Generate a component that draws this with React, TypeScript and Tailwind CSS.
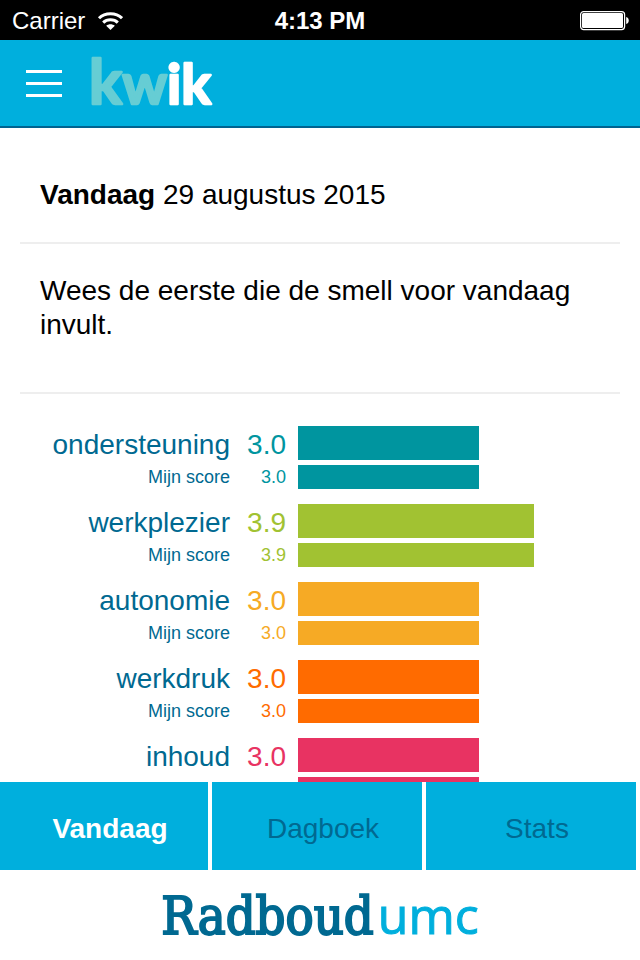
type Score = {
  label: string;
  team: number;
  mine: number;
  text: string;
  bar: string;
};

const scores: Score[] = [
  { label: "ondersteuning", team: 3.0, mine: 3.0, text: "text-[#00959f]", bar: "bg-[#00959f]" },
  { label: "werkplezier", team: 3.9, mine: 3.9, text: "text-[#a1c232]", bar: "bg-[#a1c232]" },
  { label: "autonomie", team: 3.0, mine: 3.0, text: "text-[#f6aa25]", bar: "bg-[#f6aa25]" },
  { label: "werkdruk", team: 3.0, mine: 3.0, text: "text-[#ff6b00]", bar: "bg-[#ff6b00]" },
  { label: "inhoud", team: 3.0, mine: 3.0, text: "text-[#e83362]", bar: "bg-[#e83362]" },
];

const MAX_SCORE = 5;

function StatusBar() {
  return (
    <div className="grid h-10 shrink-0 grid-cols-3 items-center bg-black px-3 pt-0.5 text-2xl text-white">
      <div className="flex items-center gap-3">
        <span>Carrier</span>
        <svg className="h-[18px] w-[26px]" viewBox="0 0 26 18" fill="none" stroke="white" strokeWidth="3" aria-label="Wi-Fi">
          <path d="M2 6.2C8 .2 19 .2 25 6.2" />
          <path d="M6.2 10.6C10 6.8 17 6.8 20.8 10.6" />
          <path d="M13.5 18 9.2 13.8C11.6 11.8 15.4 11.8 17.8 13.8Z" fill="white" stroke="none" />
        </svg>
      </div>
      <span className="text-center font-bold">4:13 PM</span>
      <svg className="-mt-0.5 h-5 w-[50px] justify-self-end overflow-visible" viewBox="0 0 50 20" aria-label="Batterij vol">
        <rect x="2.6" y="1.6" width="44" height="18" rx="3" fill="none" stroke="white" strokeWidth="1.2" />
        <rect x="4" y="3" width="41" height="15" rx="1.5" fill="white" />
        <path d="M48.2 7C51.6 7.6 51.6 13.4 48.2 14Z" fill="white" />
      </svg>
    </div>
  );
}

function Header() {
  return (
    <header className="flex h-[88px] shrink-0 items-center gap-7 border-b-2 border-[#006390] bg-[#00afdd] px-[26px]">
      <button type="button" aria-label="Menu" className="flex w-9 flex-col gap-[9px]">
        <span className="h-[3px] bg-white" />
        <span className="h-[3px] bg-white" />
        <span className="h-[3px] bg-white" />
      </button>
      <a href="#home" aria-label="kwik">
        <svg className="h-[60px] w-[124px] overflow-visible" viewBox="0 0 124 60">
          <text
            x="-1"
            y="51"
            className="font-['Lato',sans-serif] text-[56px] font-bold"
            strokeWidth="2.4"
            strokeLinejoin="round"
          >
            <tspan className="text-[62px]" fill="#66cdd4" stroke="#66cdd4">k</tspan>
            <tspan fill="#66cdd4" stroke="#66cdd4">w</tspan>
            <tspan fill="white" stroke="white">ik</tspan>
          </text>
        </svg>
      </a>
    </header>
  );
}

function ScoreLine({ label, value, score, small }: { label: string; value: string; score: Score; small?: boolean }) {
  const pad = small ? "" : "pt-[3px]";
  return (
    <div className={small ? "flex h-6 items-center text-lg" : "flex h-[34px] items-center text-[28px]"}>
      <span className={`w-[190px] text-right text-[#006991] ${pad}`}>{label}</span>
      <span className={`w-14 text-right ${score.text} ${pad}`}>{value}</span>
      <div className="ml-3 h-full flex-1">
        <div className={`h-full ${score.bar}`} style={{ width: `${(Number(value) / MAX_SCORE) * 100}%` }} />
      </div>
    </div>
  );
}

const tabs = ["Vandaag", "Dagboek", "Stats"];

export default function App() {
  return (
    <div className="flex h-screen flex-col bg-white font-['Liberation_Sans',Arial,sans-serif] text-black">
      <StatusBar />
      <Header />
      <main className="min-h-0 flex-1 overflow-y-auto px-5 text-[28px] leading-[34px] [scrollbar-width:none]">
        <h1 className="border-b-2 border-[#eeeeee] px-5 pt-[50px] pb-[30px]">
          <strong>Vandaag</strong> 29 augustus 2015
        </h1>
        <p className="border-b-2 border-[#eeeeee] px-5 pt-[30px] pb-[50px]">
          Wees de eerste die de smell voor vandaag invult.
        </p>
        <ul className="flex flex-col gap-[15px] px-5 pt-8">
          {scores.map((s) => (
            <li key={s.label} className="flex flex-col gap-[5px]">
              <ScoreLine label={s.label} value={s.team.toFixed(1)} score={s} />
              <ScoreLine label="Mijn score" value={s.mine.toFixed(1)} score={s} small />
            </li>
          ))}
        </ul>
      </main>
      <nav className="grid h-[88px] shrink-0 grid-cols-[104fr_105fr_105fr] gap-1 pr-1 text-[28px]">
        {tabs.map((tab, i) => (
          <button
            key={tab}
            type="button"
            className={
              i === 0
                ? "bg-[#00afdd] pt-1.5 pl-3 font-bold text-white"
                : "bg-[#00afdd] pt-1.5 pl-3 text-[#006991]"
            }
          >
            {tab}
          </button>
        ))}
      </nav>
      <footer className="flex h-[90px] shrink-0 items-center justify-center">
        <a href="#radboudumc" className="flex items-baseline gap-1 leading-[60px]">
          <span className="font-['DejaVu_Serif_Condensed','DejaVu_Serif',serif] text-[52px] text-[#006991] [-webkit-text-stroke:2px]">
            Radboud
          </span>
          <span className="font-['Open_Sans',sans-serif] text-[50px] text-[#00afdd] [-webkit-text-stroke:1px]">umc</span>
        </a>
      </footer>
    </div>
  );
}
